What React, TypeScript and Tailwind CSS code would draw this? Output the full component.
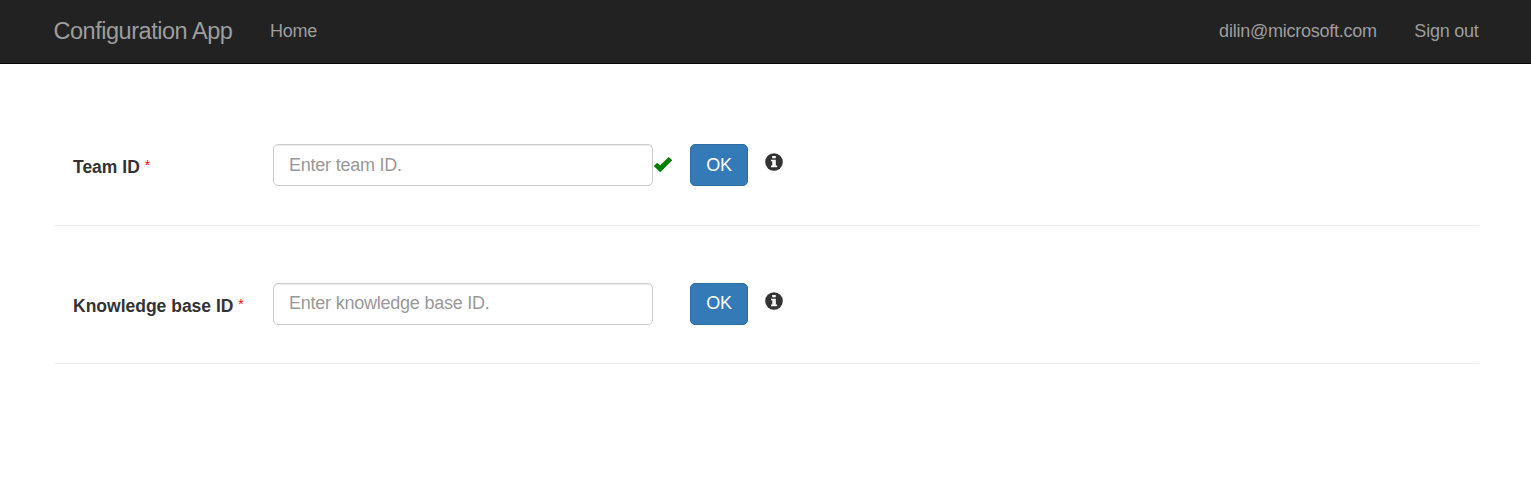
function CheckIcon() {
  return (
    <svg className="mt-[11px] h-[19px] w-[20px] shrink-0" viewBox="0 0 20 19">
      <path d="M0.8 11 L4.2 7.8 L7.2 10.3 L15.7 1.9 L19.2 5.3 L7.2 17.3 Z" fill="#008000" />
    </svg>
  );
}

function InfoIcon() {
  return (
    <svg className="ml-[17px] mt-[9px] h-[18px] w-[18px] shrink-0" viewBox="0 0 18 18">
      <circle cx="9" cy="9" r="8.8" fill="#333" />
      <path d="M7.2 3h3.6v2.3H7.2zM6 6.7h4.8v5.7h1.4v1.9H6v-1.9h1.3V8.2H6z" fill="#fff" />
    </svg>
  );
}

type FieldProps = { label: string; placeholder: string; confirmed?: boolean };

function Field({ label, placeholder, confirmed = false }: FieldProps) {
  return (
    <div className="flex h-[42px] items-start pl-[19px]">
      <label className="mt-[11px] w-[200px] shrink-0 text-[17.5px] leading-[25px] font-bold whitespace-nowrap text-[#333]">
        {label} <span className="relative -top-[3px] text-[14px] font-normal text-[#f00]">*</span>
      </label>
      <input
        className={`h-[42px] w-[380px] shrink-0 rounded-[5px] border border-[#ccc] px-[15px] text-[18px] tracking-[-0.23px] text-[#555] shadow-[inset_0_1px_1px_rgba(0,0,0,0.075)] outline-none placeholder:text-[#999] ${confirmed ? "" : "pb-[2px]"}`}
        placeholder={placeholder}
      />
      <div className="w-[37px] shrink-0">{confirmed && <CheckIcon />}</div>
      <button
        className={`h-[42px] w-[58px] shrink-0 rounded-[5px] border border-[#2e6da4] bg-[#337ab7] text-[18px] tracking-[-0.3px] text-white ${confirmed ? "" : "pb-[2px]"}`}
      >
        OK
      </button>
      <InfoIcon />
    </div>
  );
}

export default function App() {
  return (
    <div className="h-[485px] bg-white font-['Liberation_Sans',Arial,sans-serif]">
      <nav className="flex h-[64px] items-center border-b border-[#080808] bg-[#222] pr-[52.5px] pb-[1px] pl-[53.5px] text-[18px] tracking-[-0.24px] text-[#9d9d9d]">
        <a className="w-[178.5px] pt-[2px] text-[23.5px] tracking-[-0.47px] whitespace-nowrap">Configuration App</a>
        <a className="ml-[38px]">Home</a>
        <a className="ml-auto">dilin@microsoft.com</a>
        <a className="ml-[37.5px]">Sign out</a>
      </nav>
      <main className="mr-[52px] ml-[54px] pt-[80px]">
        <Field label="Team ID" placeholder="Enter team ID." confirmed />
        <hr className="mt-[39px] mb-[57px] border-[#eee]" />
        <Field label="Knowledge base ID" placeholder="Enter knowledge base ID." />
        <hr className="mt-[38px] border-[#eee]" />
      </main>
    </div>
  );
}
